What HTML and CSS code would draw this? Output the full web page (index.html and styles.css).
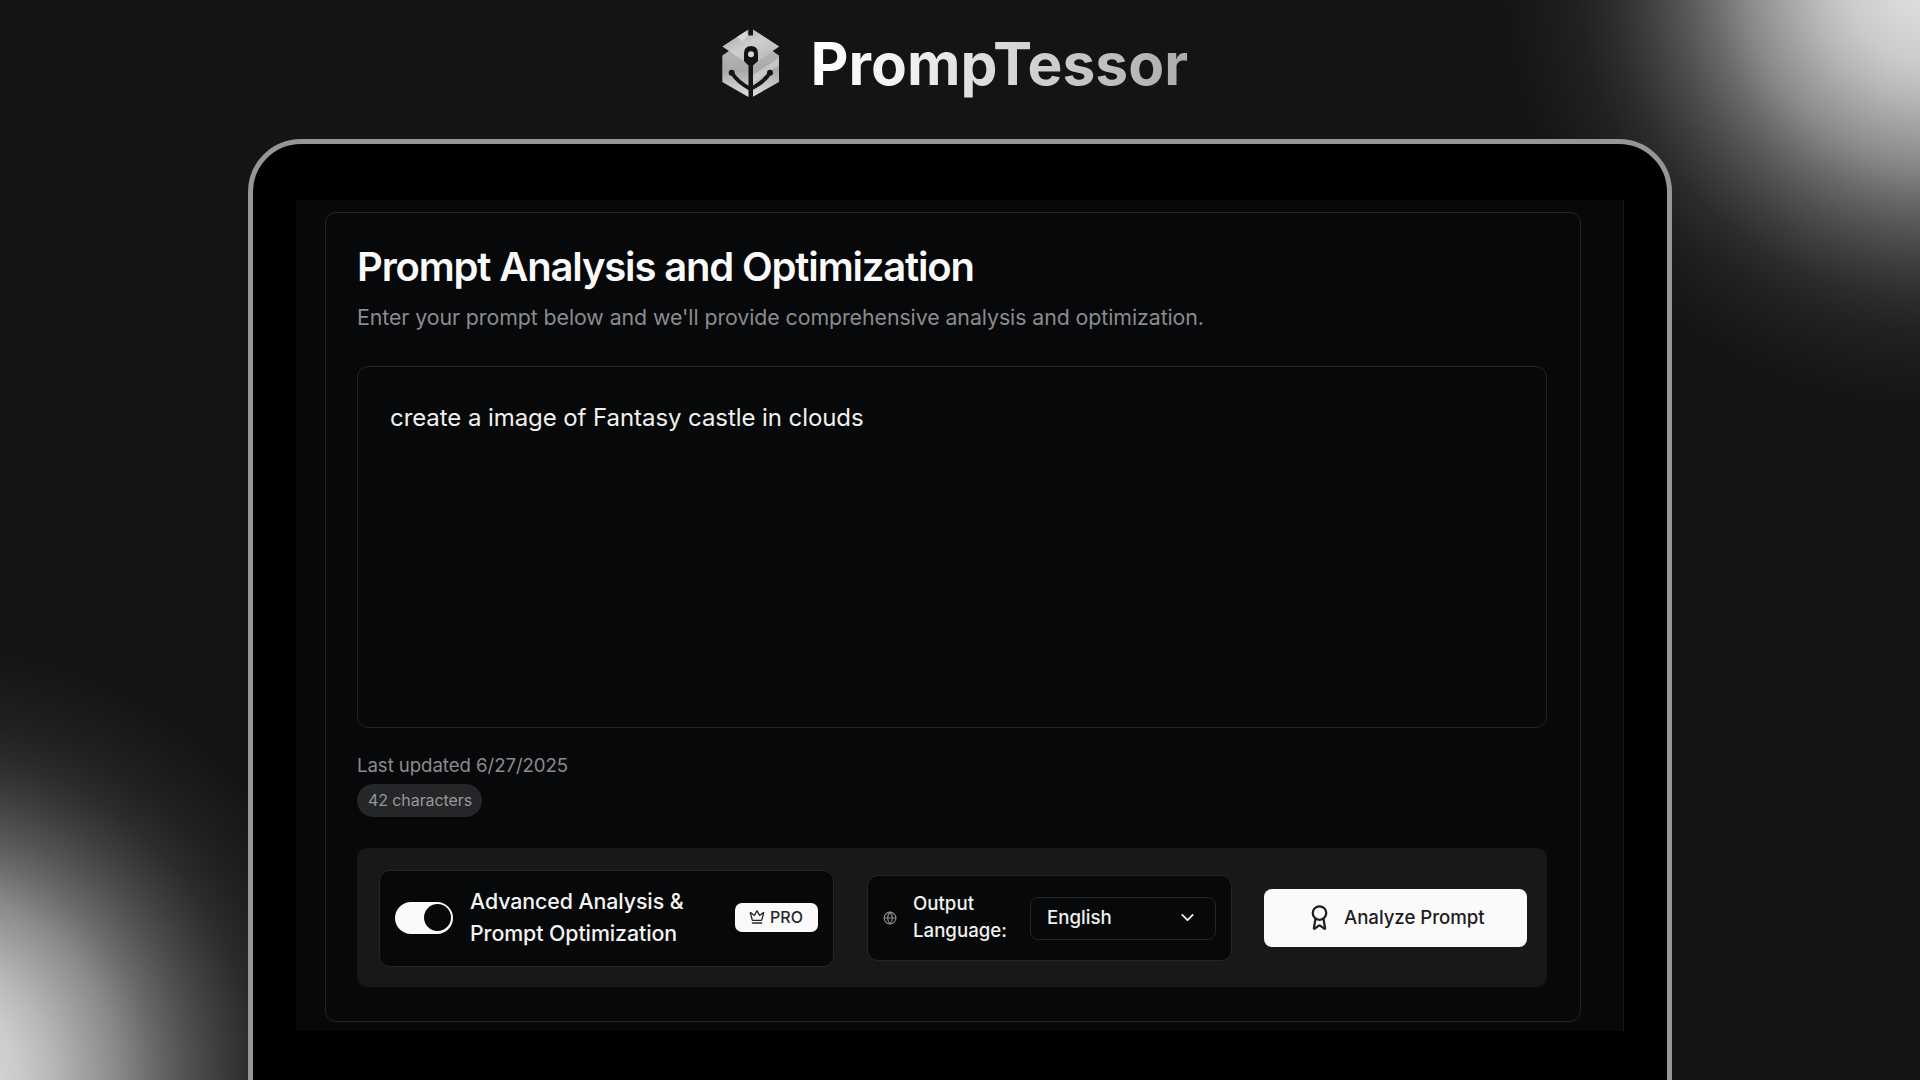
FILE: index.html
```html
<!DOCTYPE html>
<html lang="en">
<head>
<meta charset="utf-8">
<title>PrompTessor</title>
<link rel="stylesheet" href="styles.css">
</head>
<body>
<div class="page">
  <header class="brand">
    <svg class="brand-mark" viewBox="0 0 80 85" aria-hidden="true">
      <defs>
        <linearGradient id="body" x1="0" y1="0" x2="0" y2="1">
          <stop offset="0" stop-color="#bdbdbd"/>
          <stop offset=".55" stop-color="#a9a9a9"/>
          <stop offset="1" stop-color="#dedfdd"/>
        </linearGradient>
        <linearGradient id="lid" x1="0" y1="0" x2="1" y2="1">
          <stop offset="0" stop-color="#a6a6a6"/>
          <stop offset=".5" stop-color="#cfcfcf"/>
          <stop offset="1" stop-color="#b4b4b4"/>
        </linearGradient>
      </defs>
      <path fill="url(#body)" d="M12.3 35.5 19 31 41 18 62.500 31 69 35.500V62L43 76.700H38L12.300 62Z"/>
      <path fill="#d6d7d5" d="M43 55 69 38V45L43 63Z" opacity=".6"/>
      <path fill="url(#lid)" d="M38.300 9.500 12.300 26.500 33 40.500H49L69.300 26.500 43 9.500V15.500H38.300Z"/>
      <path fill="#e2e2e0" d="M27 17 36 11.200 38 15 33 21.500Z" opacity=".75"/>
      <path fill="#141414" d="M34 33.500Q34 26 41 26T48 33.500V41L43 45.500V80H38.500V45.500L34 41Z"/>
      <path fill="none" stroke="#141414" stroke-width="3.800" d="M21.700 52.700C27 61 33 65 40.500 69 48 65 55 61 60 52.700"/>
      <circle cx="21.700" cy="52.700" r="3" fill="#141414"/>
      <circle cx="60" cy="52.700" r="3" fill="#141414"/>
      <circle cx="41" cy="34.300" r="3" fill="#d8d8d8"/>
    </svg>
    <span class="brand-name">PrompTessor</span>
  </header>

  <div class="device">
    <div class="screen">
      <main class="card">
        <h1 class="title">Prompt Analysis and Optimization</h1>
        <p class="subtitle">Enter your prompt below and we'll provide comprehensive analysis and optimization.</p>
        <div class="prompt-box">create a image of Fantasy castle in clouds</div>
        <div class="updated">Last updated 6/27/2025</div>
        <div class="count">42 characters</div>

        <div class="toolbar">
          <div class="advanced">
            <div class="toggle"><span class="thumb"></span></div>
            <div class="advanced-label">Advanced Analysis &amp;<br>Prompt Optimization</div>
            <div class="pro">
              <svg class="crown" viewBox="0 0 24 24"><path d="M11.562 3.266a.5.5 0 0 1 .876 0L15.390 8.870a1 1 0 0 0 1.516.294L21.183 5.500a.5.5 0 0 1 .798.519l-2.834 10.246a1 1 0 0 1-.956.734H5.810a1 1 0 0 1-.957-.734L2.020 6.020a.5.5 0 0 1 .798-.519l4.276 3.664a1 1 0 0 0 1.516-.294z"/><path d="M5 21h14"/></svg>
              <span>PRO</span>
            </div>
          </div>
          <div class="language">
            <svg class="globe" viewBox="0 0 24 24"><circle cx="12" cy="12" r="10"/><path d="M12 2a14.500 14.500 0 0 0 0 20 14.500 14.500 0 0 0 0-20M2 12h20"/></svg>
            <div class="language-label">Output<br>Language:</div>
            <div class="select">
              <span>English</span>
              <svg class="chevron" viewBox="0 0 24 24"><path d="m6 9 6 6 6-6"/></svg>
            </div>
          </div>
          <div class="analyze">
            <svg class="award" viewBox="0 0 24 24"><path d="m15.477 12.890 1.515 8.526a.5.5 0 0 1-.81.470l-3.580-2.687a1 1 0 0 0-1.197 0l-3.586 2.686a.5.5 0 0 1-.81-.469l1.514-8.526"/><circle cx="12" cy="8" r="6"/></svg>
            <span>Analyze Prompt</span>
          </div>
        </div>
      </main>
    </div>
  </div>
</div>
</body>
</html>
```
FILE: styles.css
```css
* { box-sizing: border-box; }

body {
  margin: 0;
  background: #141414;
  font-family: Inter, "Liberation Sans", sans-serif;
}

.page {
  width: 1920px;
  height: 1080px;
  overflow: hidden;
  display: flex;
  flex-direction: column;
  align-items: center;
  background:
    radial-gradient(circle 460px at 1935px -25px, #e2e2e2 0, #dadada 43px, #cbcbcb 90px, #b7b7b7 125px, #a5a5a5 150px, #898989 190px, #6a6a6a 225px, #525252 258px, #3d3d3d 292px, #2c2c2c 325px, #212121 358px, #1b1b1b 390px, #141414 435px, transparent 460px),
    radial-gradient(circle 460px at -72px 1078px, #e2e2e2 0, #dadada 43px, #cbcbcb 90px, #b7b7b7 125px, #a5a5a5 150px, #898989 190px, #6a6a6a 225px, #525252 258px, #3d3d3d 292px, #2c2c2c 325px, #212121 358px, #1b1b1b 390px, #141414 435px, transparent 460px),
    #141414;
}

.brand {
  flex: none;
  height: 139px;
  width: 500px;
  display: flex;
  align-items: flex-start;
  padding: 20px 0 0;
}

.brand-mark { width: 80px; height: 85px; flex: none; }

.brand-name {
  margin-left: 20.500px;
  margin-top: 8px;
  font-size: 58.700px;
  line-height: 71px;
  font-weight: 700;
  color: transparent;
  background: linear-gradient(90deg, #fff 0%, #f0f0f0 25%, #d0d0d0 60%, #acacac 100%);
  background-clip: text;
  -webkit-background-clip: text;
}

.device {
  flex: none;
  width: 1424px;
  height: 1000px;
  border: 5px solid #969696;
  border-radius: 53px;
  background: #000;
  padding: 56px 43px;
}

.screen {
  width: 1328px;
  height: 831px;
  background: #070809;
  border-right: 1px solid #151617;
  padding: 12px 0 0 29px;
}

.card {
  width: 1256px;
  height: 810px;
  border: 1px solid #222325;
  border-radius: 11px;
  padding: 30px 31px;
  display: flex;
  flex-direction: column;
  align-items: flex-start;
}

.title {
  margin: 0;
  font-size: 40px;
  line-height: 48px;
  font-weight: 600;
  letter-spacing: -1.160px;
  color: #fafafa;
}

.subtitle {
  margin: 10px 0 0;
  font-size: 21.330px;
  line-height: 32px;
  letter-spacing: -.074px;
  color: #8b8b90;
}

.prompt-box {
  margin-top: 33px;
  width: 1190px;
  height: 362px;
  border: 1px solid #222325;
  border-radius: 11px;
  padding: 33px 32px;
  font-size: 24px;
  line-height: 36px;
  letter-spacing: -.075px;
  color: #f0f0ee;
}

.updated {
  margin-top: 24px;
  font-size: 18.670px;
  line-height: 27px;
  letter-spacing: -.080px;
  color: #8b8b8e;
}

.count {
  margin-top: 5px;
  height: 33px;
  width: 125px;
  padding: 0 11px;
  border-radius: 17px;
  background: #252628;
  font-size: 16px;
  line-height: 32px;
  letter-spacing: -.090px;
  white-space: nowrap;
  color: #98989c;
}

.toolbar {
  margin-top: 31px;
  width: 1190px;
  height: 139px;
  border-radius: 11px;
  background: #17181a;
  padding: 0 20px 0 22px;
  display: flex;
  align-items: center;
}

.advanced {
  width: 455px;
  height: 97px;
  margin-top: 2px;
  border: 1px solid #242527;
  border-radius: 11px;
  background: #070809;
  padding: 0 15px 2px;
  display: flex;
  align-items: center;
}

.toggle {
  width: 58px;
  height: 32px;
  padding: 0 2px;
  border-radius: 16px;
  background: #fafafa;
  display: flex;
  align-items: center;
  justify-content: flex-end;
}

.thumb { width: 27px; height: 27px; border-radius: 50%; background: #070809; }

.advanced-label {
  margin-left: 17px;
  font-size: 21.330px;
  line-height: 31.500px;
  letter-spacing: -.070px;
  font-weight: 500;
  color: #f4f4f2;
}

.pro {
  margin-left: auto;
  width: 83px;
  height: 29px;
  border-radius: 7px;
  background: #fafafa;
  color: #27282a;
  display: flex;
  align-items: center;
  gap: 5px;
  padding: 0 0 1px 14px;
  font-size: 16px;
  line-height: 26px;
  font-weight: 500;
}

svg { flex: none; }

.crown, .globe, .chevron, .award {
  fill: none;
  stroke: currentColor;
  stroke-width: 2;
  stroke-linecap: round;
  stroke-linejoin: round;
}

.crown { width: 16px; height: 16px; }

.language {
  margin-left: 33px;
  width: 365px;
  height: 86px;
  border: 1px solid #242527;
  border-radius: 11px;
  background: #070809;
  padding: 0 15px;
  display: flex;
  align-items: center;
  color: #f0f0ee;
  font-size: 18.670px;
  font-weight: 500;
}

.globe { width: 14px; height: 14px; color: #8b8b8e; }

.language-label { margin-left: 16px; line-height: 26.670px; }

.select {
  margin-left: auto;
  width: 186px;
  height: 43px;
  border: 1px solid #242527;
  border-radius: 8px;
  padding: 0 17px 1px 16px;
  margin-top: 1px;
  display: flex;
  align-items: center;
  justify-content: space-between;
}

.chevron { width: 21px; height: 21px; }

.analyze {
  margin-left: auto;
  width: 263px;
  height: 58px;
  border-radius: 8px;
  background: #fafafa;
  color: #1c1d1f;
  display: flex;
  align-items: center;
  padding-left: 42px;
  gap: 11px;
  font-size: 18.670px;
  letter-spacing: -.050px;
  font-weight: 500;
}

.award { width: 27px; height: 27px; }
```
